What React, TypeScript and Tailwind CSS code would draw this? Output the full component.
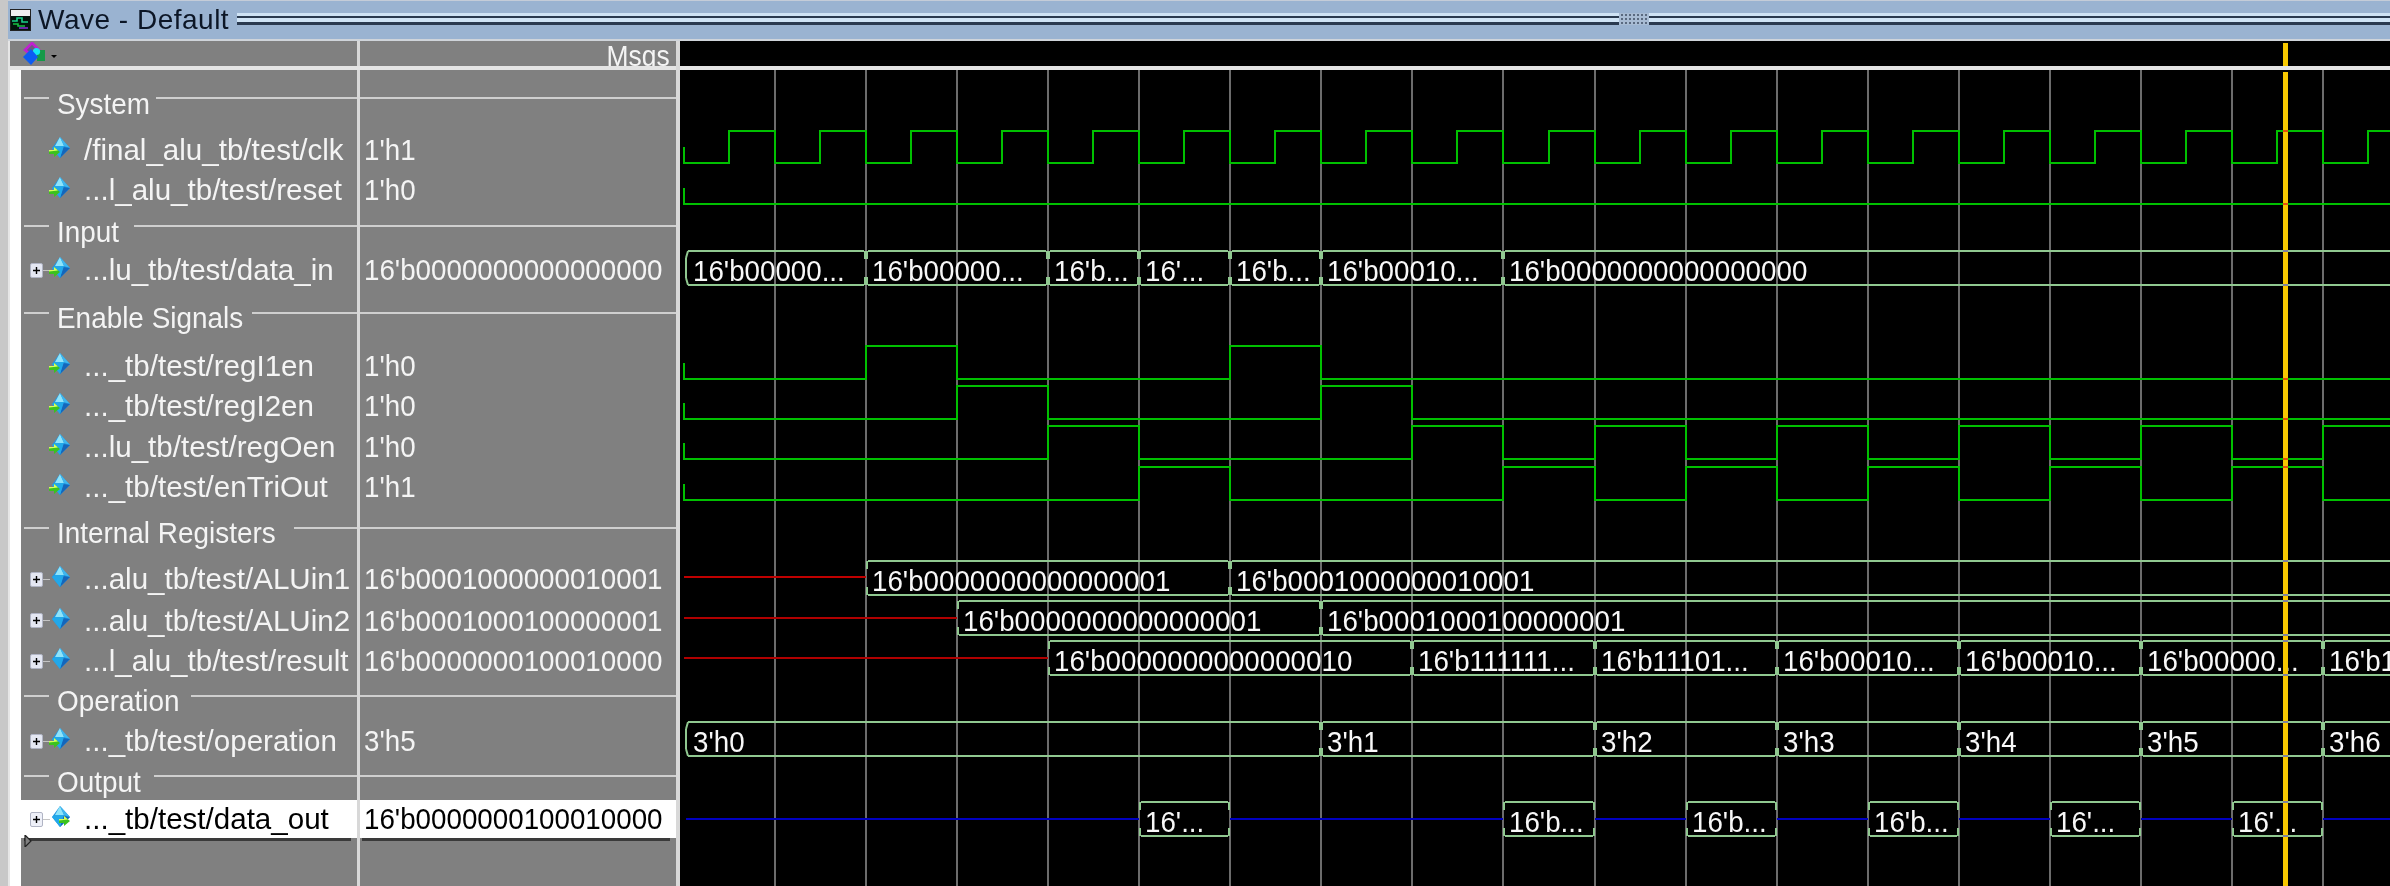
import React from "react";

const g = (k: number) => Math.round(775 + 91.06 * k);
const W_END = 2392;

type Kind = "in" | "int" | "out";
type Row =
  | { t: "group"; label: string; h: number; line: number; center: number; width: number }
  | { t: "sig"; name: string; value: string; h: number; kind: Kind; plus?: boolean; selected?: boolean };

const rows: Row[] = [
  { t: "group", label: "System", h: 60, line: 28, center: 34, width: 99 },
  { t: "sig", name: "/final_alu_tb/test/clk", value: "1'h1", h: 40, kind: "in" },
  { t: "sig", name: "...l_alu_tb/test/reset", value: "1'h0", h: 40, kind: "in" },
  { t: "group", label: "Input", h: 40, line: 16, center: 22, width: 77 },
  { t: "sig", name: "...lu_tb/test/data_in", value: "16'b0000000000000000", h: 40, kind: "in", plus: true },
  { t: "group", label: "Enable Signals", h: 56, line: 23, center: 28, width: 195 },
  { t: "sig", name: "..._tb/test/regI1en", value: "1'h0", h: 40, kind: "in" },
  { t: "sig", name: "..._tb/test/regI2en", value: "1'h0", h: 40, kind: "in" },
  { t: "sig", name: "...lu_tb/test/regOen", value: "1'h0", h: 41, kind: "in" },
  { t: "sig", name: "..._tb/test/enTriOut", value: "1'h1", h: 40, kind: "in" },
  { t: "group", label: "Internal Registers", h: 51, line: 21, center: 26, width: 237 },
  { t: "sig", name: "...alu_tb/test/ALUin1", value: "16'b0001000000010001", h: 42, kind: "int", plus: true },
  { t: "sig", name: "...alu_tb/test/ALUin2", value: "16'b0001000100000001", h: 41, kind: "int", plus: true },
  { t: "sig", name: "...l_alu_tb/test/result", value: "16'b0000000100010000", h: 40, kind: "int", plus: true },
  { t: "group", label: "Operation", h: 40, line: 15, center: 20, width: 134 },
  { t: "sig", name: "..._tb/test/operation", value: "3'h5", h: 40, kind: "in", plus: true },
  { t: "group", label: "Output", h: 39, line: 15, center: 21, width: 97 },
  { t: "sig", name: "..._tb/test/data_out", value: "16'b0000000100010000", h: 38, kind: "out", plus: true, selected: true },
];

function Diamond({ kind }: { kind: Kind }) {
  return (
    <svg width="22" height="22" viewBox="0 0 22 22" className="shrink-0">
      <polygon points="11,0 21,11 11,21 3,11" fill="#2196e0" />
      <polygon points="11,0 15,9 6,9" fill="#8fe4fa" />
      <polygon points="11,0 21,11 15,9" fill="#3fb6ee" />
      <polygon points="21,11 11,21 14,10" fill="#1566bb" />
      <polygon points="3,11 6,9 15,9 11,21" fill="#22a8ea" />
      {kind === "in" && (
        <g>
          <polygon points="0,13 5,13 5,10 11,15 5,20 5,17 0,17" fill="#3cc21e" />
          <polygon points="0,13 5,13 5,10 9,13.5 0,14.5" fill="#d8ff60" />
        </g>
      )}
      {kind === "out" && (
        <g>
          <polygon points="10,13 15,13 15,10 21,15 15,20 15,17 10,17" fill="#3cc21e" />
          <polygon points="10,13 15,13 15,10 19,13.5 10,14.5" fill="#d8ff60" />
        </g>
      )}
    </svg>
  );
}

function PlusBox({ light }: { light?: boolean }) {
  return (
    <div className="flex items-center shrink-0">
      <div className={`w-[13px] h-[15px] flex items-center justify-center border border-[#b0b4c4] rounded-[2px] ${light ? "bg-[#eef0f8]" : "bg-[#e4e7f2]"}`}>
        <svg width="7" height="7" viewBox="0 0 7 7">
          <path d="M0 3.5H7M3.5 0V7" stroke="#000" strokeWidth="1.4" />
        </svg>
      </div>
      <div className="w-[7px] h-[1px] bg-[#c4c4c4]" />
    </div>
  );
}

const divider = "border-r-[3px] border-[#d8d8d8]";
const labelCls = "whitespace-nowrap text-[30px] leading-[32px] origin-left blur-[0.4px]";

function GroupRow({ r }: { r: Extract<Row, { t: "group" }> }) {
  const lineCls = "h-[2px] bg-[#cfcfcf]";
  return (
    <div className="flex shrink-0" style={{ height: r.h }}>
      <div className={`w-[339px] shrink-0 flex ${divider}`}>
        <div className={`${lineCls} w-[25px] ml-[3px]`} style={{ marginTop: r.line - 1 }} />
        <div className="ml-[8px] shrink-0" style={{ width: r.width, marginTop: r.center - 16 }}>
          <div className={`${labelCls} text-[#f4f4f4] scale-x-[0.93]`}>{r.label}</div>
        </div>
        <div className={`${lineCls} flex-1`} style={{ marginTop: r.line - 1 }} />
      </div>
      <div className="flex-1 min-w-0">
        <div className={lineCls} style={{ marginTop: r.line - 1 }} />
      </div>
    </div>
  );
}

function SigRow({ r }: { r: Extract<Row, { t: "sig" }> }) {
  const color = r.selected ? "text-black" : "text-[#f4f4f4]";
  return (
    <div className="flex shrink-0" style={{ height: r.h }}>
      <div className={`w-[339px] shrink-0 flex items-center overflow-hidden ${divider} ${r.selected ? "bg-white" : ""}`}>
        <div className="w-[9px] shrink-0" />
        {r.plus ? <PlusBox light={r.selected} /> : <div className="w-[20px] shrink-0" />}
        <div className="-mt-[4px] -ml-[1px]"><Diamond kind={r.kind} /></div>
        <div className={`ml-[13px] ${labelCls} ${color} scale-x-[0.985]`}>{r.name}</div>
      </div>
      <div className={`flex-1 min-w-0 flex items-center pl-[4px] ${r.selected ? "bg-white" : ""}`}>
        <div className={`${labelCls} ${color} scale-x-[0.925]`}>{r.value}</div>
      </div>
    </div>
  );
}

function HeaderIcon() {
  return (
    <svg width="36" height="24" viewBox="0 0 36 24" className="ml-[13px] shrink-0">
      <polygon points="9,1 16,8 9,14 2,8" fill="#6a5a80" stroke="#c020d0" strokeWidth="2.6" />
      <rect x="14" y="8" width="8" height="11" fill="#149a48" />
      <circle cx="13.5" cy="9.5" r="3.6" fill="#15e6f2" />
      <polygon points="8,7 15,15 8,23 0,15" fill="#0c5cf2" />
      <polygon points="28,13 34,13 31,16" fill="#000" />
    </svg>
  );
}

function TitleIcon() {
  return (
    <svg width="21" height="22" viewBox="0 0 21 22" className="shrink-0 ml-[2px]">
      <rect x="0" y="0" width="21" height="22" fill="#222" />
      <rect x="1" y="1" width="19" height="6" fill="#f0f0f0" />
      <rect x="1" y="7" width="19" height="14" fill="#02140c" />
      <path d="M2 12H7V9H12V13H18" stroke="#18d088" strokeWidth="1.6" fill="none" />
      <path d="M3 15H8V17H15" stroke="#16c040" strokeWidth="1.6" fill="none" />
      <path d="M9 19H18" stroke="#8030d0" strokeWidth="1.6" fill="none" />
    </svg>
  );
}

const busColor = "#90c890";

function busSeg(x0: number, x1: number, top: number, first: boolean, open: boolean) {
  const bot = top + 34;
  const t = top;
  let d = `M${x0 + 2} ${t}H${open ? x1 : x1 - 2} M${x0 + 2} ${bot}H${open ? x1 : x1 - 2}`;
  if (first) {
    d += ` M${x0} ${t + 7}V${bot - 7} M${x0} ${t + 7}L${x0 + 2} ${t} M${x0} ${bot - 7}L${x0 + 2} ${bot}`;
  } else {
    d += ` M${x0 + 1} ${t}V${t + 8} M${x0 + 1} ${bot - 8}V${bot}`;
  }
  if (!open) d += ` M${x1 - 1} ${t}V${t + 8} M${x1 - 1} ${bot - 8}V${bot}`;
  return d;
}

type Seg = { a: number; b: number; text: string; first?: boolean; open?: boolean };

function Bus({ top, segs }: { top: number; segs: Seg[] }) {
  return (
    <g>
      {segs.map((s, i) => (
        <g key={i}>
          <path d={busSeg(s.a, s.b, top, !!s.first, !!s.open)} stroke={busColor} strokeWidth="2" fill="none" />
          <text
            transform={`translate(${s.a + (s.first ? 7 : 6)} ${top + 30}) scale(0.925 1)`}
            fontSize="30"
            fill="#f8f8f8"
            className="blur-[0.4px]"
          >
            {s.text}
          </text>
        </g>
      ))}
    </g>
  );
}

function levelPath(low: number, high: number, toggles: number[]) {
  let d = `M684 ${low - 16}V${low}`;
  let lvl = low;
  for (const x of toggles) {
    d += `H${x}`;
    lvl = lvl === low ? high : low;
    d += `V${lvl}`;
  }
  return d + `H${W_END}`;
}

function Waves() {
  const clk: number[] = [];
  for (let k = -1; k <= 17; k++) {
    clk.push(Math.round(729 + 91.06 * (k + 1)));
    if (k + 1 <= 17) clk.push(g(k + 1));
  }
  const grid = Array.from({ length: 18 }, (_, k) => g(k));
  const bus = [251, 285, 561, 595, 601, 635, 641, 675, 722, 756, 802, 836];
  const vis = [131, 204, 379, 419, 459, 467];
  const oenT = [g(3), g(4), g(7), g(8), g(9), g(10), g(11), g(12), g(13), g(14), g(15), g(16), g(17)];
  const enT = [g(4), g(5), g(8), g(9), g(10), g(11), g(12), g(13), g(14), g(15), g(16), g(17)];
  return (
    <svg
      width="1710"
      height="816"
      viewBox="680 70 1710 816"
      className="block font-['Liberation_Sans',sans-serif]"
    >
      {grid.map((x) => (
        <path key={x} d={`M${x} 70V886`} stroke="#6c6c6c" strokeWidth="2" />
      ))}
      <g stroke="#00c000" strokeWidth="2" fill="none">
        <path d={levelPath(163, 131, clk)} />
        <path d={levelPath(204, 172, [])} />
        <path d={levelPath(379, 346, [g(1), g(2), g(5), g(6)])} />
        <path d={levelPath(419, 386, [g(2), g(3), g(6), g(7)])} />
        <path d={levelPath(459, 426, oenT)} />
        <path d={levelPath(500, 467, enT)} />
      </g>
      <Bus
        top={251}
        segs={[
          { a: 686, b: g(1), text: "16'b00000...", first: true },
          { a: g(1), b: g(3), text: "16'b00000..." },
          { a: g(3), b: g(4), text: "16'b..." },
          { a: g(4), b: g(5), text: "16'..." },
          { a: g(5), b: g(6), text: "16'b..." },
          { a: g(6), b: g(8), text: "16'b00010..." },
          { a: g(8), b: W_END, text: "16'b0000000000000000", open: true },
        ]}
      />
      <path d={`M684 577H${g(1)}`} stroke="#c00000" strokeWidth="2" />
      <path d={`M684 618H${g(2)}`} stroke="#b00000" strokeWidth="2" />
      <path d={`M684 658H${g(3)}`} stroke="#b00000" strokeWidth="2" />
      <Bus
        top={561}
        segs={[
          { a: g(1), b: g(5), text: "16'b0000000000000001" },
          { a: g(5), b: W_END, text: "16'b0001000000010001", open: true },
        ]}
      />
      <Bus
        top={601}
        segs={[
          { a: g(2), b: g(6), text: "16'b0000000000000001" },
          { a: g(6), b: W_END, text: "16'b0001000100000001", open: true },
        ]}
      />
      <Bus
        top={641}
        segs={[
          { a: g(3), b: g(7), text: "16'b0000000000000010" },
          { a: g(7), b: g(9), text: "16'b111111..." },
          { a: g(9), b: g(11), text: "16'b11101..." },
          { a: g(11), b: g(13), text: "16'b00010..." },
          { a: g(13), b: g(15), text: "16'b00010..." },
          { a: g(15), b: g(17), text: "16'b00000..." },
          { a: g(17), b: W_END, text: "16'b1", open: true },
        ]}
      />
      <Bus
        top={722}
        segs={[
          { a: 686, b: g(6), text: "3'h0", first: true },
          { a: g(6), b: g(9), text: "3'h1" },
          { a: g(9), b: g(11), text: "3'h2" },
          { a: g(11), b: g(13), text: "3'h3" },
          { a: g(13), b: g(15), text: "3'h4" },
          { a: g(15), b: g(17), text: "3'h5" },
          { a: g(17), b: W_END, text: "3'h6", open: true },
        ]}
      />
      <path
        d={`M686 819H${g(4)} M${g(5)} 819H${g(8)} M${g(9)} 819H${g(10)} M${g(11)} 819H${g(12)} M${g(13)} 819H${g(14)} M${g(15)} 819H${g(16)} M${g(17)} 819H${W_END}`}
        stroke="#0000c0"
        strokeWidth="2"
      />
      <Bus
        top={802}
        segs={[
          { a: g(4), b: g(5), text: "16'..." },
          { a: g(8), b: g(9), text: "16'b..." },
          { a: g(10), b: g(11), text: "16'b..." },
          { a: g(12), b: g(13), text: "16'b..." },
          { a: g(14), b: g(15), text: "16'..." },
          { a: g(16), b: g(17), text: "16'..." },
        ]}
      />
      <rect x="2283" y="72" width="5" height="814" fill="#f7c800" />
      {vis.map((y) => (
        <rect key={y} x="2283" y={y - 1} width="5" height="2" fill="#e85010" />
      ))}
      {bus.map((y) => (
        <rect key={y} x="2283" y={y - 1} width="5" height="2" fill="#8080a0" />
      ))}
    </svg>
  );
}

export default function App() {
  return (
    <div className="w-[2390px] h-[886px] overflow-hidden flex bg-[#c8c8c8] font-['Liberation_Sans',sans-serif]">
      <div className="w-[8px] shrink-0 bg-[#c8c8c8]" />
      <div className="flex-1 flex flex-col min-w-0">
        {/* Title bar */}
        <div className="relative h-[41px] shrink-0 flex items-center bg-[#9ab3d1] border-t border-[#c4ccd8] border-b-2 border-b-[#cfd4da] overflow-hidden">
          <TitleIcon />
          <div className="ml-[7px] text-[28px] leading-[30px] tracking-[0.5px] text-[#0c1626] whitespace-nowrap blur-[0.4px]">Wave - Default</div>
          <div className="flex-1 ml-[8px] -mt-[3px] flex flex-col">
            <div className="h-[3px] bg-[#cfe3f5]" />
            <div className="h-[2px] bg-[#2a3a50]" />
            <div className="h-[4px] bg-[#cfe3f5]" />
            <div className="h-[3px] bg-[#2a3a50]" />
          </div>
          <svg width="30" height="12" viewBox="0 0 30 12" className="absolute left-[1611px] top-[12px]">
            <rect width="30" height="12" fill="#a8bcd4" />
            {Array.from({ length: 7 }, (_, i) =>
              [0, 4, 8].map((y) => (
                <rect key={`${i}-${y}`} x={2 + i * 4} y={y + 1} width="2" height="2" fill="#5a6a80" />
              ))
            )}
          </svg>
        </div>
        <div className="flex-1 flex min-h-0">
          <div className="w-[2px] bg-[#e6e6e6] shrink-0" />
          {/* Left panes */}
          <div className="w-[670px] shrink-0 flex flex-col border-r-4 border-[#d8d8d8]">
            <div className="h-[25px] shrink-0 flex bg-[#808080] overflow-hidden">
              <div className={`w-[350px] shrink-0 flex items-center ${divider}`}>
                <HeaderIcon />
              </div>
              <div className="flex-1 min-w-0 flex justify-end pr-[6px]">
                <div className="text-[30px] leading-[32px] -mt-[1px] text-[#f4f4f4] scale-x-[0.88] origin-right whitespace-nowrap blur-[0.4px]">Msgs</div>
              </div>
            </div>
            <div className="h-[4px] shrink-0 bg-[#e4e4e4]" />
            <div className="flex-1 flex min-h-0 bg-[#808080]">
              <div className="w-[11px] shrink-0 bg-white" />
              <div className="flex-1 min-w-0 flex flex-col relative">
                {rows.map((r, i) =>
                  r.t === "group" ? <GroupRow key={i} r={r} /> : <SigRow key={i} r={r} />
                )}
                <div className="h-[3px] shrink-0 flex">
                  <div className={`w-[339px] shrink-0 flex ${divider}`}>
                    <div className="ml-[3px] w-[327px] bg-[#3a3a3a]" />
                  </div>
                  <div className="ml-[2px] w-[308px] bg-[#3a3a3a]" />
                </div>
                <div className="flex-1 flex">
                  <div className={`w-[339px] shrink-0 ${divider}`} />
                </div>
                <svg width="8" height="12" viewBox="0 0 8 12" className="absolute left-[3px] top-[765px]">
                  <polygon points="1,0 7,6 1,12" fill="#808080" stroke="#222" strokeWidth="1.2" />
                </svg>
              </div>
            </div>
          </div>
          {/* Wave pane */}
          <div className="flex-1 min-w-0 flex flex-col bg-black">
            <div className="relative h-[25px] shrink-0 bg-black">
              <div className="absolute left-[1603px] top-[2px] w-[5px] h-[23px] bg-[#f7c800]" />
            </div>
            <div className="h-[4px] shrink-0 bg-[#e4e4e4]" />
            <Waves />
          </div>
        </div>
      </div>
    </div>
  );
}
